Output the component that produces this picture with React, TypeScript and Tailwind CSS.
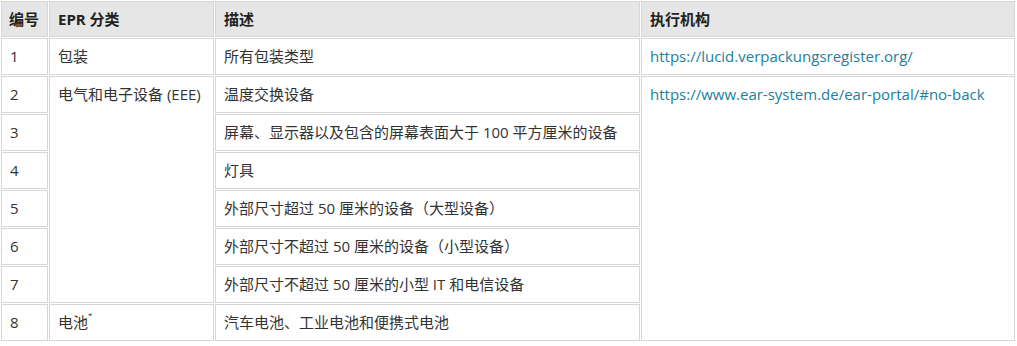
import React from 'react';

interface Row {
    no: string;
    desc: string;
}

const eeeRows: Row[] = [
    { no: '2', desc: '温度交换设备' },
    { no: '3', desc: '屏幕、显示器以及包含的屏幕表面大于 100 平方厘米的设备' },
    { no: '4', desc: '灯具' },
    { no: '5', desc: '外部尺寸超过 50 厘米的设备（大型设备）' },
    { no: '6', desc: '外部尺寸不超过 50 厘米的设备（小型设备）' },
    { no: '7', desc: '外部尺寸不超过 50 厘米的小型 IT 和电信设备' },
];

const cell = 'border border-[#d6d6d6] px-2 py-[8px] leading-[19px] align-top text-left whitespace-nowrap';
const head = 'border border-[#d6d6d6] bg-[#e6e6e6] px-2 py-[8px] leading-[18px] text-left font-bold text-[#222] whitespace-nowrap';
const link = 'text-[#21809d] no-underline';

export default function App() {
    return (
        <div className="bg-white w-[1017px] h-[346px] font-['Open_Sans','Noto_Sans_CJK_SC',sans-serif] text-[15px] text-[#333]">
            <table className="w-[1016px] border-separate border-spacing-[1px] table-fixed">
                <colgroup>
                    <col className="w-[47px]" />
                    <col className="w-[165px]" />
                    <col className="w-[425px]" />
                    <col />
                </colgroup>
                <thead>
                    <tr>
                        <th className={`${head} !px-[7px]`}>编号</th>
                        <th className={head}>EPR 分类</th>
                        <th className={head}>描述</th>
                        <th className={head}>执行机构</th>
                    </tr>
                </thead>
                <tbody>
                    <tr>
                        <td className={cell}>1</td>
                        <td className={cell}>包装</td>
                        <td className={cell}>所有包装类型</td>
                        <td className={cell}>
                            <a className={link} href="#">https://lucid.verpackungsregister.org/</a>
                        </td>
                    </tr>
                    {eeeRows.map((r, i) => (
                        <tr key={r.no}>
                            <td className={cell}>{r.no}</td>
                            {i === 0 && (
                                <td className={cell} rowSpan={6}>电气和电子设备 (EEE)</td>
                            )}
                            <td className={cell}>{r.desc}</td>
                            {i === 0 && (
                                <td className={cell} rowSpan={7}>
                                    <a className={link} href="#">https://www.ear-system.de/ear-portal/#no-back</a>
                                </td>
                            )}
                        </tr>
                    ))}
                    <tr>
                        <td className={cell}>8</td>
                        <td className={cell}>
                            电池<sup className="text-[8px] align-super">*</sup>
                        </td>
                        <td className={cell}>汽车电池、工业电池和便携式电池</td>
                    </tr>
                </tbody>
            </table>
        </div>
    );
}
